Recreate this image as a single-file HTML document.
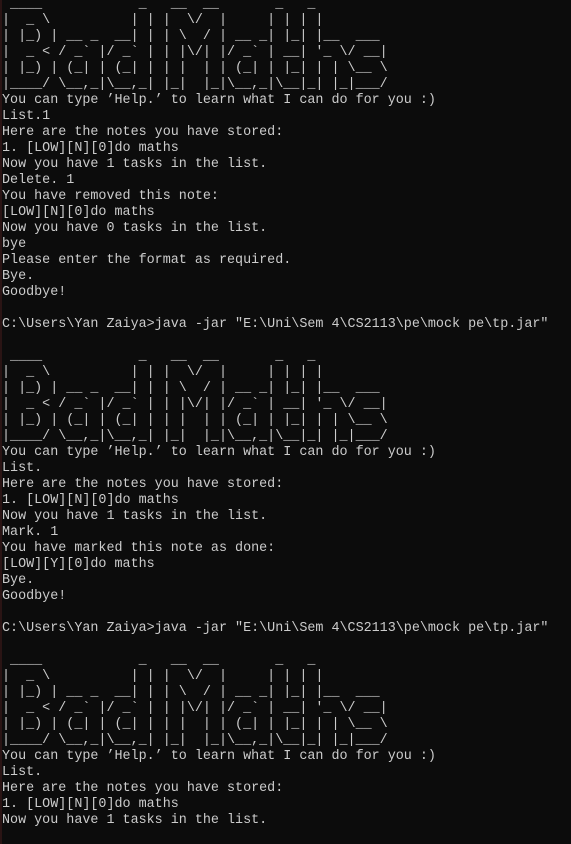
<!DOCTYPE html>
<html><head><meta charset="utf-8"><style>
html,body{margin:0;padding:0;background:#0c0c0c;width:571px;height:844px;overflow:hidden}
body{border-left:2px solid #2a1414;box-sizing:border-box}
pre{margin:0;position:absolute;left:2px;top:-3px;font-family:"Liberation Mono","Noto Sans CJK SC",monospace;font-size:13.4px;line-height:16px;color:#cccccc;white-space:pre}
</style></head><body><pre> ____            _   __  __       _   _
|  _ \          | | |  \/  |     | | | |
| |_) | __ _  __| | | \  / | __ _| |_| |__  ___
|  _ &lt; / _` |/ _` | | |\/| |/ _` | __| '_ \/ __|
| |_) | (_| | (_| | | |  | | (_| | |_| | | \__ \
|____/ \__,_|\__,_| |_|  |_|\__,_|\__|_| |_|___/
You can type ’Help.’ to learn what I can do for you :)
List.1
Here are the notes you have stored:
1. [LOW][N][0]do maths
Now you have 1 tasks in the list.
Delete. 1
You have removed this note:
[LOW][N][0]do maths
Now you have 0 tasks in the list.
bye
Please enter the format as required.
Bye.
Goodbye!

C:\Users\Yan Zaiya>java -jar ″E:\Uni\Sem 4\CS2113\pe\mock pe\tp.jar″

 ____            _   __  __       _   _
|  _ \          | | |  \/  |     | | | |
| |_) | __ _  __| | | \  / | __ _| |_| |__  ___
|  _ &lt; / _` |/ _` | | |\/| |/ _` | __| '_ \/ __|
| |_) | (_| | (_| | | |  | | (_| | |_| | | \__ \
|____/ \__,_|\__,_| |_|  |_|\__,_|\__|_| |_|___/
You can type ’Help.’ to learn what I can do for you :)
List.
Here are the notes you have stored:
1. [LOW][N][0]do maths
Now you have 1 tasks in the list.
Mark. 1
You have marked this note as done:
[LOW][Y][0]do maths
Bye.
Goodbye!

C:\Users\Yan Zaiya>java -jar ″E:\Uni\Sem 4\CS2113\pe\mock pe\tp.jar″

 ____            _   __  __       _   _
|  _ \          | | |  \/  |     | | | |
| |_) | __ _  __| | | \  / | __ _| |_| |__  ___
|  _ &lt; / _` |/ _` | | |\/| |/ _` | __| '_ \/ __|
| |_) | (_| | (_| | | |  | | (_| | |_| | | \__ \
|____/ \__,_|\__,_| |_|  |_|\__,_|\__|_| |_|___/
You can type ’Help.’ to learn what I can do for you :)
List.
Here are the notes you have stored:
1. [LOW][N][0]do maths
Now you have 1 tasks in the list.
</pre></body></html>
